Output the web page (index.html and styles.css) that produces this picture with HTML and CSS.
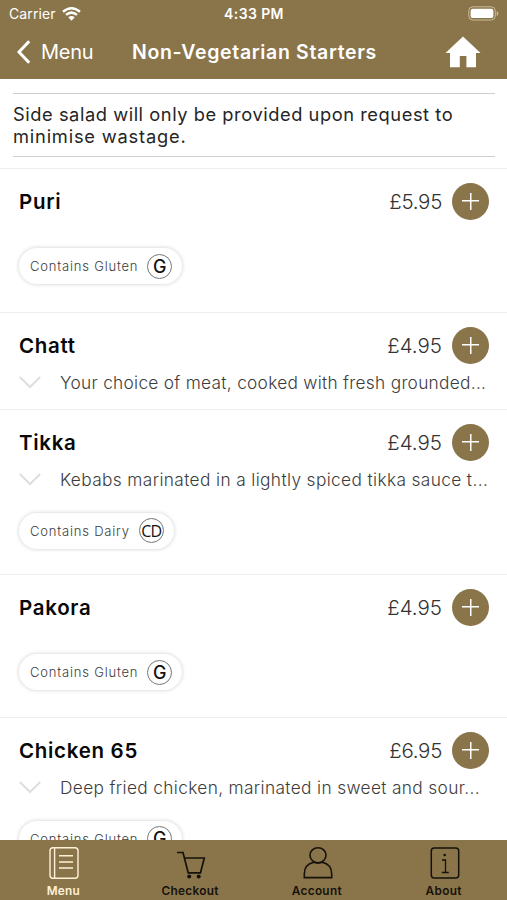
FILE: index.html
```html
<!DOCTYPE html>
<html lang="en">
<head>
<meta charset="utf-8">
<title>Non-Vegetarian Starters</title>
<link rel="stylesheet" href="styles.css">
</head>
<body>
<div class="app">
  <header class="header">
    <div class="status">
      <div class="carrier"><span class="carrier-name">Carrier</span>
        <svg class="wifi" width="19" height="14" viewBox="0 0 19 14"><path d="M1 4.800Q9.500-2.200 18 4.800M4 7.900Q9.500 3.400 15 7.900" fill="none" stroke="#fff" stroke-width="2.500"/><path d="M6.300 10.300Q9.500 7.800 12.700 10.300L9.500 13.700Z" fill="#fff"/></svg>
      </div>
      <span class="clock">4:33 PM</span>
      <svg class="battery" width="31" height="15" viewBox="0 0 31 15"><rect x=".8" y=".8" width="26.500" height="13.200" rx="4" fill="none" stroke="#c8b99a" stroke-width="1"/><rect x="2.600" y="2.700" width="22.800" height="9.400" rx="2.200" fill="#fff"/><path d="M28.700 5v5q1.700-.8 1.700-2.500T28.700 5" fill="#c8b99a"/></svg>
    </div>
    <nav class="nav">
      <a class="back"><svg width="16" height="24" viewBox="0 0 16 24"><path d="M13.200 1.300L3 12l10.200 10.700" fill="none" stroke="#fff" stroke-width="3"/></svg><span class="back-label">Menu</span></a>
      <h1 class="title">Non-Vegetarian Starters</h1>
      <svg class="home" width="36" height="32" viewBox="0 0 36 32"><path d="M18 .5L35.500 17H31v14.300h-9.600V20h-6.600v11.300H5V17H.5Z" fill="#fff"/></svg>
    </nav>
  </header>
  <main class="content">
    <p class="notice"><span class="n1">Side salad will only be provided upon request to</span><br><span class="n2">minimise wastage.</span></p>
    <section class="item puri">
      <div class="head"><h2 class="name">Puri</h2><span class="price">£5.95</span><button class="add" aria-label="Add"></button></div>
      <div class="tag"><span class="tag-text">Contains Gluten</span><span class="badge">G</span></div>
    </section>
    <section class="item chatt">
      <div class="head"><h2 class="name">Chatt</h2><span class="price wide">£4.95</span><button class="add" aria-label="Add"></button></div>
      <div class="desc"><svg width="22" height="13" viewBox="0 0 22 13"><path d="M.8 1l10.200 10L21.200 1" fill="none" stroke="#dedede" stroke-width="2"/></svg><span class="d1">Your choice of meat, cooked with fresh grounded...</span></div>
    </section>
    <section class="item tikka">
      <div class="head"><h2 class="name">Tikka</h2><span class="price wide">£4.95</span><button class="add" aria-label="Add"></button></div>
      <div class="desc"><svg width="22" height="13" viewBox="0 0 22 13"><path d="M.8 1l10.200 10L21.200 1" fill="none" stroke="#dedede" stroke-width="2"/></svg><span class="d2">Kebabs marinated in a lightly spiced tikka sauce t...</span></div>
      <div class="tag"><span class="tag-text dairy">Contains Dairy</span><span class="badge cd">CD</span></div>
    </section>
    <section class="item pakora">
      <div class="head"><h2 class="name">Pakora</h2><span class="price wide">£4.95</span><button class="add" aria-label="Add"></button></div>
      <div class="tag"><span class="tag-text">Contains Gluten</span><span class="badge">G</span></div>
    </section>
    <section class="item chicken">
      <div class="head"><h2 class="name">Chicken 65</h2><span class="price">£6.95</span><button class="add" aria-label="Add"></button></div>
      <div class="desc"><svg width="22" height="13" viewBox="0 0 22 13"><path d="M.8 1l10.200 10L21.200 1" fill="none" stroke="#dedede" stroke-width="2"/></svg><span class="d3">Deep fried chicken, marinated in sweet and sour...</span></div>
      <div class="tag"><span class="tag-text">Contains Gluten</span><span class="badge">G</span></div>
    </section>
  </main>
  <footer class="tabs">
    <a class="tab active"><svg width="32" height="34" viewBox="0 0 32 34"><g fill="none" stroke="currentColor" stroke-width="1.400"><rect x="2" y="1.700" width="28" height="30.600" rx="3"/><path d="M6.600 2v30M11 9.700h14M11 16h14M11 22h14"/></g></svg><span>Menu</span></a>
    <a class="tab checkout"><svg width="32" height="34" viewBox="0 0 32 34"><path d="M2 6.500h6l5.200 20.300h12.300L29.300 12H9.600" fill="none" stroke="currentColor" stroke-width="1.700"/><circle cx="14.200" cy="30.500" r="2" fill="currentColor"/><circle cx="23.700" cy="30.500" r="2" fill="currentColor"/></svg><span>Checkout</span></a>
    <a class="tab account"><svg width="32" height="34" viewBox="0 0 32 34"><g fill="none" stroke="currentColor" stroke-width="1.600"><ellipse cx="16" cy="9.300" rx="8" ry="7.600"/><path d="M11.800 16.200C5.800 17.500 2.300 22 2.300 28v3.600h27.400V28c0-6-3.500-10.500-9.500-11.800Q16 17.600 11.800 16.200"/></g></svg><span>Account</span></a>
    <a class="tab about"><svg width="32" height="34" viewBox="0 0 32 34"><rect x="2.300" y="2" width="27.400" height="30" rx="3" fill="none" stroke="currentColor" stroke-width="1.500"/><circle cx="15.700" cy="9" r="1.300" fill="currentColor"/><path d="M13 14h3.500v12.500M12.800 26.500h7" fill="none" stroke="currentColor" stroke-width="1.300"/></svg><span>About</span></a>
  </footer>
</div>
</body>
</html>
```
FILE: styles.css
```css
* { box-sizing: border-box; }
body { margin: 0; background: #fff; font-family: Inter, "Liberation Sans", sans-serif; }
h1, h2, p { margin: 0; }
.app { width: 507px; height: 900px; display: flex; flex-direction: column; overflow: hidden; }
.header { height: 79px; background: #8a754b; color: #fff; flex: none; }
.status { height: 27px; padding: 0 8px 0 9px; display: grid; grid-template-columns: 1fr auto 1fr; align-items: center; }
.carrier { display: flex; align-items: center; gap: 6px; }
.carrier-name { font-size: 14px; letter-spacing: .1px; }
.clock { font-size: 14px; font-weight: 600; letter-spacing: .4px; }
.battery { justify-self: end; }
.nav { height: 50px; padding: 0 26px 0 16px; display: grid; grid-template-columns: 116px 1fr 36px; align-items: center; }
.back { display: flex; align-items: center; gap: 9px; }
.back-label { font-size: 20px; letter-spacing: -.3px; }
.title { font-size: 19.5px; font-weight: 600; letter-spacing: .65px; white-space: nowrap; }
.content { flex: 1; min-height: 0; overflow: hidden; }
.notice { margin: 14px 12px 11px 13px; height: 64px; padding-top: 9px; border-top: 1px solid #cfcfcf; border-bottom: 1px solid #cfcfcf; color: #252525; font-size: 18.3px; line-height: 22px; white-space: nowrap; }
.n1 { letter-spacing: .55px; }
.n2 { letter-spacing: .8px; }
.item { border-top: 1px solid #efefef; padding: 13.5px 18px 0 19px; }
.puri { height: 144px; }
.chatt { height: 97px; }
.tikka { height: 165px; }
.pakora { height: 143px; }
.chicken { height: 165px; }
.head { height: 37px; display: flex; align-items: center; }
.name { flex: 1; font-size: 20.5px; font-weight: 600; color: #080808; letter-spacing: .7px; }
.price { font-size: 20.5px; font-weight: 300; color: #333; letter-spacing: -.3px; margin-right: 10px; }
.price.wide { letter-spacing: 0; }
.add { width: 37px; height: 37px; padding: 0; border: 0; border-radius: 50%; background: linear-gradient(#fff, #fff) center / 17px 1.5px no-repeat, linear-gradient(#fff, #fff) center / 1.5px 17px no-repeat, #8a754b; }
.desc { height: 37px; display: flex; align-items: center; gap: 19px; font-size: 17.3px; font-weight: 300; color: #3c3c3c; white-space: nowrap; }
.d1 { letter-spacing: .29px; }
.d2 { letter-spacing: .37px; }
.d3 { letter-spacing: .35px; }
.tag { height: 36px; width: fit-content; margin-top: 28.5px; padding: 0 10px 0 11px; display: flex; align-items: center; gap: 9px; border-radius: 18px; background: #fff; box-shadow: 0 0 4px rgba(0, 0, 0, .2); }
.desc + .tag { margin-top: 15px; }
.tag-text { font-size: 13px; font-weight: 300; color: #3c3c3c; letter-spacing: .8px; white-space: nowrap; }
.badge { width: 25px; height: 25px; border: 1px solid #777; border-radius: 50%; display: grid; place-items: center; font-size: 18px; font-weight: 500; color: #111; }
.badge.cd { font-family: "Open Sans", sans-serif; font-size: 16px; letter-spacing: -.8px; }
.tabs { height: 60px; flex: none; background: #8a754b; display: grid; grid-template-columns: repeat(4, 1fr); color: #16120a; }
.tab { display: flex; flex-direction: column; align-items: center; padding-top: 6px; font-size: 11.8px; font-weight: 600; letter-spacing: .3px; }
.tab svg { position: relative; left: 1px; }
.tab span { line-height: 14px; margin-top: 4px; }
.active { color: #fff1d8; }
```
